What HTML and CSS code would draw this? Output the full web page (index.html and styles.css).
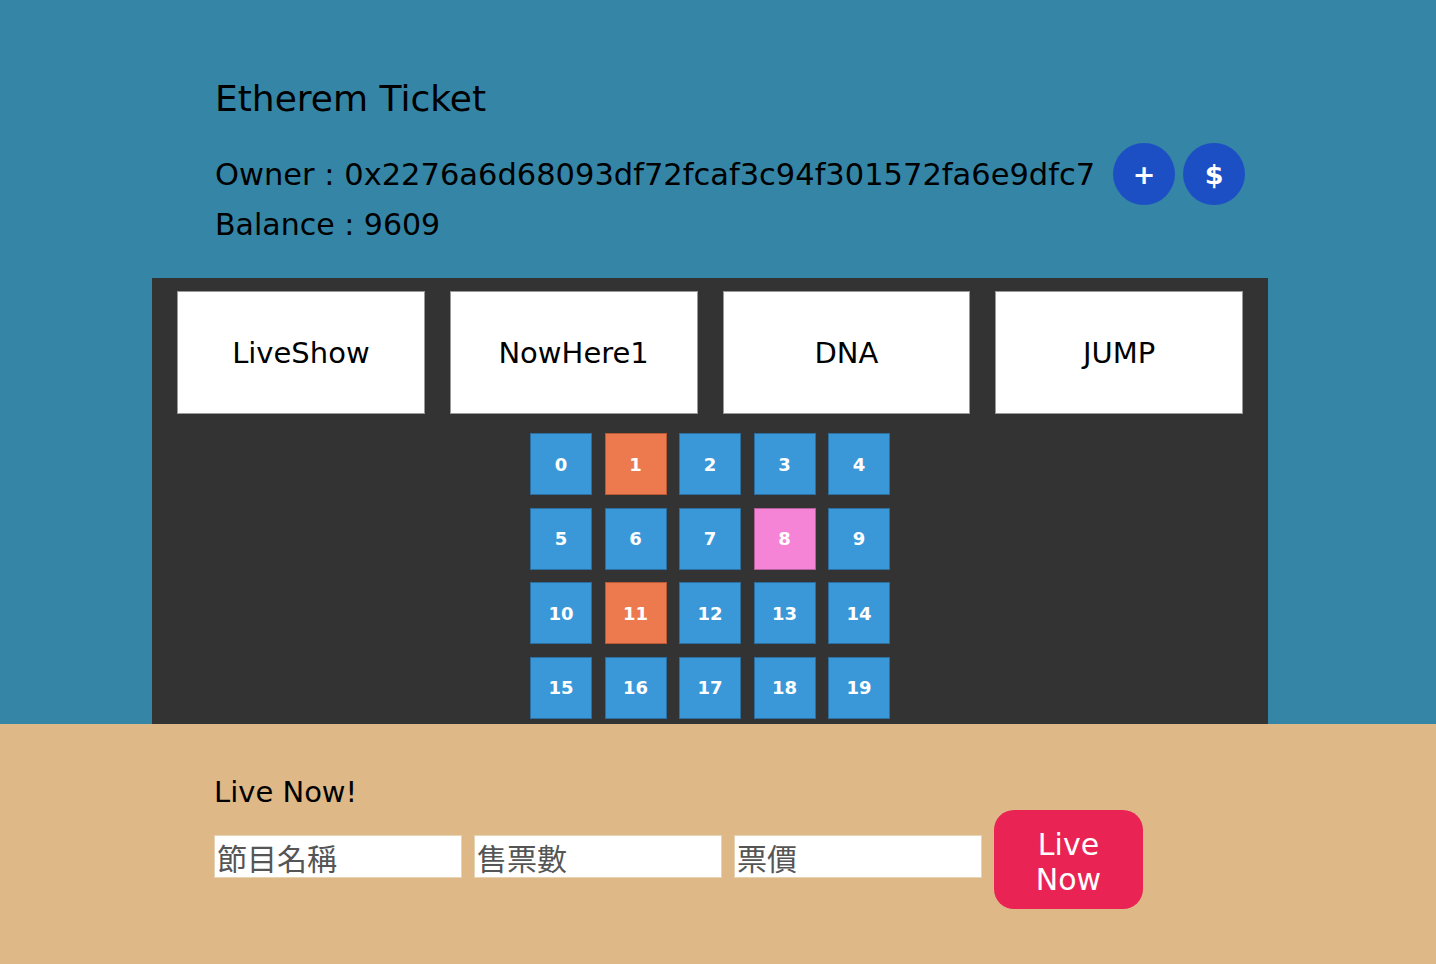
FILE: index.html
```html
<!DOCTYPE html>
<html lang="zh-Hant">
<head>
<meta charset="utf-8">
<title>Etherem Ticket</title>
<link rel="stylesheet" href="styles.css">
</head>
<body>
<div class="top">
  <header class="info">
    <h1 class="title">Etherem Ticket</h1>
    <div class="owner-row">
      <span class="owner">Owner : 0x2276a6d68093df72fcaf3c94f301572fa6e9dfc7</span>
      <button class="round">+</button>
      <button class="round">$</button>
    </div>
    <div class="balance">Balance : 9609</div>
  </header>
  <section class="panel">
    <div class="shows">
      <div class="show">LiveShow</div>
      <div class="show">NowHere1</div>
      <div class="show">DNA</div>
      <div class="show">JUMP</div>
    </div>
    <div class="seats">
      <div class="seat">0</div>
      <div class="seat sold">1</div>
      <div class="seat">2</div>
      <div class="seat">3</div>
      <div class="seat">4</div>
      <div class="seat">5</div>
      <div class="seat">6</div>
      <div class="seat">7</div>
      <div class="seat mine">8</div>
      <div class="seat">9</div>
      <div class="seat">10</div>
      <div class="seat sold">11</div>
      <div class="seat">12</div>
      <div class="seat">13</div>
      <div class="seat">14</div>
      <div class="seat">15</div>
      <div class="seat">16</div>
      <div class="seat">17</div>
      <div class="seat">18</div>
      <div class="seat">19</div>
    </div>
  </section>
</div>
<section class="bottom">
  <h2 class="live-title">Live Now!</h2>
  <div class="form">
    <input class="field" type="text" placeholder="節目名稱">
    <input class="field" type="text" placeholder="售票數">
    <input class="field" type="text" placeholder="票價">
    <button class="live-btn">Live Now</button>
  </div>
</section>
</body>
</html>
```

FILE: styles.css
```css
html, body {
  margin: 0;
  padding: 0;
}
body {
  font-family: "DejaVu Sans", "Noto Sans CJK TC", sans-serif;
  background: #deb887;
  color: #000;
}
.top {
  background: #3585a6;
  padding-top: 76px;
}
.info {
  padding-left: 215px;
}
.title {
  margin: 0;
  font-size: 36px;
  font-weight: normal;
  line-height: 46px;
}
.owner-row {
  display: flex;
  align-items: center;
  margin-top: 21px;
  height: 62px;
}
.owner {
  font-size: 30.5px;
  margin-right: 18px;
}
.round {
  width: 62px;
  height: 62px;
  border-radius: 50%;
  border: none;
  background: #1d4fc4;
  color: #fff;
  font-family: "DejaVu Sans", sans-serif;
  font-size: 27px;
  font-weight: bold;
  margin-right: 8px;
  padding: 0;
}
.balance {
  font-size: 30px;
  line-height: 40px;
  margin-top: 0;
  padding-bottom: 33px;
}
.panel {
  margin-left: 152px;
  width: 1116px;
  box-sizing: border-box;
  background: #333;
  padding: 13px 25px 5.5px;
}
.shows {
  display: grid;
  grid-template-columns: repeat(4, 1fr);
  gap: 25px;
}
.show {
  height: 123px;
  background: #fff;
  border: 1px solid #999;
  box-sizing: border-box;
  display: flex;
  align-items: center;
  justify-content: center;
  font-size: 29px;
}
.seats {
  margin: 19px auto 0;
  width: 360px;
  display: grid;
  grid-template-columns: repeat(5, 62px);
  column-gap: 12.5px;
  row-gap: 12.5px;
}
.seat {
  height: 62px;
  background: #3a98d8;
  border: 1px solid #2b6f9e;
  box-sizing: border-box;
  display: flex;
  align-items: center;
  justify-content: center;
  color: #fff;
  font-weight: bold;
  font-size: 18px;
}
.seat.sold {
  background: #ec7a4e;
  border-color: #b85a36;
}
.seat.mine {
  background: #f584d7;
  border-color: #b1609c;
}
.bottom {
  background: #deb887;
  padding: 50px 0 0 214px;
  height: 240px;
  box-sizing: border-box;
}
.live-title {
  margin: 0;
  font-size: 29px;
  font-weight: normal;
  line-height: 36px;
}
.form {
  display: flex;
  align-items: flex-start;
  gap: 12px;
}
.field {
  width: 248px;
  height: 43px;
  margin: 25px 0 0;
  box-sizing: border-box;
  border: 1px solid #e6d2b5;
  background: #fff;
  padding: 0 2px;
  font-family: "Noto Sans CJK TC", sans-serif;
  font-size: 30px;
}
.field::placeholder {
  color: #555;
}
.live-btn {
  width: 149px;
  height: 99px;
  border: none;
  border-radius: 20px;
  background: #e92454;
  color: #fff;
  font-family: "DejaVu Sans", sans-serif;
  font-size: 30px;
  line-height: 35px;
  padding: 4px 20px 0;
}
```
